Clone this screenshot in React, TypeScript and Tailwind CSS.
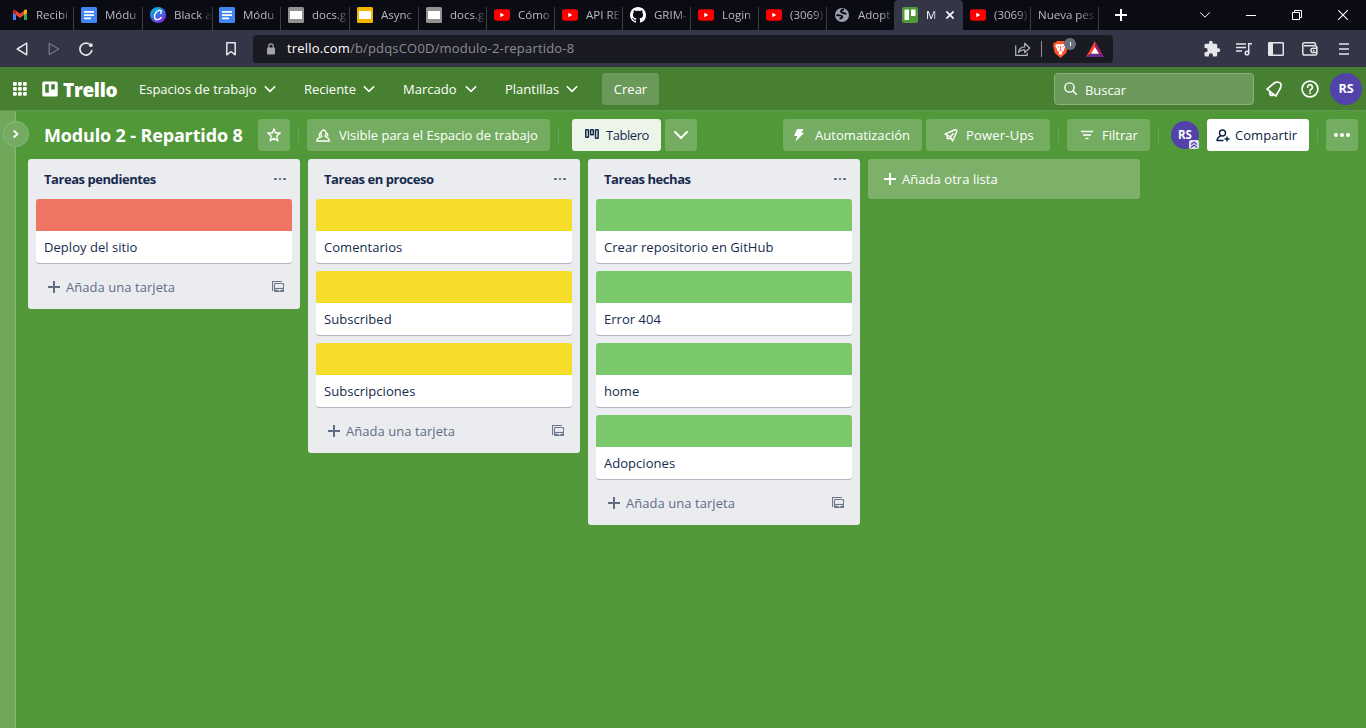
import React from 'react';

type IconProps = { className?: string };

const Gmail = () => (
  <svg viewBox="0 0 16 16" className="h-4 w-4">
    <path d="M1 3.5V13h3V7z" fill="#4285f4" />
    <path d="M15 3.5V13h-3V7z" fill="#34a853" />
    <path d="M12 4.5V8l3-2.3V4c0-1.5-1.600-2-3-.8z" fill="#fbbc04" />
    <path d="M4 8V3.800L8 6.800l4-3V8l-4 3z" fill="#ea4335" />
    <path d="M1 4v1.700L4 8V3.800C2.600 2.200 1 2.700 1 4z" fill="#c5221f" />
  </svg>
);

const Docs = () => (
  <svg viewBox="0 0 16 16" className="h-4 w-4">
    <rect width="16" height="16" rx="1.5" fill="#4285f4" />
    <path d="M3 4h10v1.700H3zM3 7.200h10v1.700H3zM3 10.500h7v1.700H3z" fill="#fff" />
  </svg>
);

const Canva = () => (
  <svg viewBox="0 0 16 16" className="h-4 w-4">
    <defs>
      <linearGradient id="canva" x1="0" y1="0" x2="0.6" y2="1">
        <stop offset="0" stopColor="#00c4cc" />
        <stop offset="0.5" stopColor="#2b7be0" />
        <stop offset="1" stopColor="#7d2ae8" />
      </linearGradient>
    </defs>
    <circle cx="8" cy="8" r="8" fill="url(#canva)" />
    <path d="M10.800 6.500c1.300-2.200-.1-3.500-1.800-3.100C6.200 4 4.100 7.600 4.500 10.200c.6 3.500 4.700 3 6.700.3" fill="none" stroke="#fff" strokeWidth="1.400" strokeLinecap="round" />
  </svg>
);

const Slides = ({ gray }: { gray?: boolean }) => (
  <svg viewBox="0 0 16 16" className="h-4 w-4">
    <rect width="16" height="16" rx="1.500" fill={gray ? '#929292' : '#f4b400'} />
    <rect x="2" y="4" width="12" height="8" fill="#fff" />
  </svg>
);

const YouTube = () => (
  <svg viewBox="0 0 16 16" className="h-4 w-4">
    <rect y="2.300" width="16" height="11.400" rx="2.800" fill="#f00" />
    <path d="M6.300 5.700v4.600l4-2.300z" fill="#fff" />
  </svg>
);

const GitHub = () => (
  <svg viewBox="0 0 16 16" className="h-4 w-4" fill="#fff">
    <path d="M8 0C3.580 0 0 3.580 0 8c0 3.540 2.290 6.530 5.470 7.590.4.070.55-.17.55-.38 0-.19-.01-.82-.01-1.490-2.010.37-2.530-.49-2.690-.94-.09-.23-.48-.94-.82-1.130-.28-.15-.68-.52-.01-.53.63-.01 1.080.58 1.230.82.72 1.210 1.870.87 2.330.66.07-.52.28-.87.51-1.070-1.780-.2-3.640-.89-3.640-3.950 0-.87.31-1.590.82-2.150-.08-.2-.36-1.020.08-2.120 0 0 .67-.21 2.200.82.64-.18 1.320-.27 2-.27s1.360.09 2 .27c1.530-1.040 2.200-.82 2.200-.82.44 1.100.16 1.920.08 2.120.51.56.82 1.270.82 2.150 0 3.070-1.870 3.750-3.650 3.950.29.25.54.73.54 1.480 0 1.070-.01 1.930-.01 2.200 0 .21.150.46.55.38A8.010 8.010 0 0 0 16 8c0-4.420-3.580-8-8-8z" />
  </svg>
);

const Globe = () => (
  <svg viewBox="0 0 16 16" className="h-4 w-4">
    <circle cx="8" cy="8" r="7" fill="#9aa0ae" />
    <path d="M10 2.500C7 2.700 6 4.500 8 5.400c1.500.6 2 1.400 4.500 1.200M2.500 8c2 .8 4.500-.2 5.500 1 1 1.400-.5 2.500-2.500 2.500" fill="none" stroke="#0b0b14" strokeWidth="1.900" />
  </svg>
);

const TrelloFavicon = () => (
  <svg viewBox="0 0 16 16" className="h-4 w-4">
    <rect width="16" height="16" rx="2" fill="#519839" />
    <rect x="2.500" y="2.500" width="4.500" height="10.500" rx="0.6" fill="#fff" />
    <rect x="9" y="2.500" width="4.500" height="6.500" rx="0.6" fill="#fff" />
  </svg>
);

const Chevron = ({ className = '' }: IconProps) => (
  <svg viewBox="0 0 12 12" className={`h-3 w-3 shrink-0 ${className}`} fill="none" stroke="currentColor" strokeWidth="1.600" strokeLinecap="round" strokeLinejoin="round">
    <path d="M1.300 3.700 6 8.400l4.700-4.700" />
  </svg>
);

const Plus = () => (
  <svg viewBox="0 0 12 12" className="h-3 w-3 shrink-0" fill="currentColor">
    <path d="M5 0h2v5h5v2H7v5H5V7H0V5h5z" />
  </svg>
);

const Template = () => (
  <svg viewBox="0 0 12 12" className="h-3 w-3 shrink-0" fill="none" stroke="#6b778c" strokeWidth="1.100">
    <path d="M.5 10V.5H10" />
    <rect x="2.500" y="2.500" width="9" height="8" rx="0.5" />
    <path d="M2.500 7.500h9" />
    <path d="M2.500 9.700h4M8.500 9.700h3" strokeWidth="1.800" />
  </svg>
);

const tabs: { icon: React.ReactNode; title: string; active?: boolean; wide?: boolean }[] = [
  { icon: <Gmail />, title: 'Recibi', wide: true },
  { icon: <Docs />, title: 'Módu', wide: true },
  { icon: <Canva />, title: 'Black a', wide: true },
  { icon: <Docs />, title: 'Módu', wide: true },
  { icon: <Slides gray />, title: 'docs.g', wide: true },
  { icon: <Slides />, title: 'Async', wide: true },
  { icon: <Slides gray />, title: 'docs.g' },
  { icon: <YouTube />, title: 'Cómo' },
  { icon: <YouTube />, title: 'API RE' },
  { icon: <GitHub />, title: 'GRIM-' },
  { icon: <YouTube />, title: 'Login' },
  { icon: <YouTube />, title: '(3069)' },
  { icon: <Globe />, title: 'Adopt' },
  { icon: <TrelloFavicon />, title: 'M', active: true, wide: true },
  { icon: <YouTube />, title: '(3069)' },
  { icon: null, title: 'Nueva pes' },
];

function TabStrip() {
  return (
    <div className="flex h-[30px] bg-[#0b0b14] pl-[5px] text-[11.5px] text-[#b9bac2]">
      {tabs.map((t, i) => (
        <div
          key={i}
          className={`flex h-[30px] shrink-0 items-center ${t.wide ? 'w-[69px]' : 'w-[68px]'} ${t.active ? '-ml-px rounded-t-[4px] bg-[#343546] pl-[8px] text-white' : 'pl-[7px]'}`}
        >
          {t.icon && <span className="mr-2 w-4 shrink-0">{t.icon}</span>}
          <span
            className={`whitespace-nowrap ${t.active ? 'w-3 [mask-image:linear-gradient(to_right,black_60%,transparent)]' : 'flex-1 [mask-image:linear-gradient(to_right,black_65%,transparent)]'}`}
          >
            {t.title}
          </span>
          {t.active ? (
            <svg viewBox="0 0 8 8" className="ml-2 h-2 w-2" stroke="#fff" strokeWidth="1.600">
              <path d="M.4.4l7.200 7.200M7.600.4.4 7.600" />
            </svg>
          ) : (
            <span className={`mt-[7px] h-[23px] w-px shrink-0 ${tabs[i + 1]?.active ? '' : 'bg-[#3c3b42]'}`} />
          )}
        </div>
      ))}
      <div className="flex flex-1 items-center text-white">
        <svg viewBox="0 0 12 12" className="ml-4 h-3 w-3" stroke="currentColor" strokeWidth="2">
          <path d="M6 0v12M0 6h12" />
        </svg>
        <svg viewBox="0 0 10 6" className="ml-[73px] h-1.5 w-2.5" fill="none" stroke="currentColor" strokeWidth="1">
          <path d="M.3.4 5 5.200 9.700.4" />
        </svg>
        <span className="ml-9 h-px w-2.5 bg-white" />
        <svg viewBox="0 0 10 10" className="ml-9 h-2.5 w-2.5" fill="none" stroke="currentColor" strokeWidth="1">
          <path d="M.5 2.500h7v7h-7zM2.500 2.500v-2h7v7h-2" />
        </svg>
        <svg viewBox="0 0 10 10" className="ml-9 h-2.5 w-2.5" fill="none" stroke="currentColor" strokeWidth="1.100">
          <path d="M.3.3l9.400 9.400M9.700.3.3 9.700" />
        </svg>
      </div>
    </div>
  );
}

function Toolbar() {
  return (
    <div className="flex h-[37px] items-center bg-[#343546] text-[#e6e6ea]">
      <svg viewBox="0 0 12 14" className="ml-4 h-3.5 w-3" fill="none" stroke="currentColor" strokeWidth="1.500" strokeLinejoin="round">
        <path d="M10.700 1.200v11.600L1.200 7z" />
      </svg>
      <svg viewBox="0 0 12 14" className="ml-5 h-3.5 w-3" fill="none" stroke="#73747f" strokeWidth="1.400" strokeLinejoin="round">
        <path d="M1.300 1.500v11L10.800 7z" />
      </svg>
      <svg viewBox="0 0 14 14" className="ml-[19px] h-3.5 w-3.5" fill="none" stroke="currentColor" strokeWidth="1.700" strokeLinecap="round">
        <path d="M9.500 1.600A6 6 0 1 0 12.800 8.500" />
        <circle cx="11.800" cy="3.200" r="1.900" fill="currentColor" stroke="none" />
      </svg>
      <svg viewBox="0 0 10 14" className="ml-[133px] h-3.5 w-2.5" fill="none" stroke="currentColor" strokeWidth="1.500" strokeLinejoin="round">
        <path d="M.8.800h8.400v12L5 9.500.8 12.800z" />
      </svg>
      <div className="ml-[17px] flex h-7 w-[860px] items-center rounded-[4px] bg-[#191a22] pl-3.5">
        <svg viewBox="0 0 8 12" className="h-3 w-2">
          <rect y="4.500" width="8" height="7" rx="1" fill="#a1a2ab" />
          <path d="M1.800 5V3a2.200 2.200 0 0 1 4.400 0v2" fill="none" stroke="#a1a2ab" strokeWidth="1.200" />
        </svg>
        <div className="ml-3 w-[728px] whitespace-nowrap text-[13px] tracking-[0.18px] text-[#8c8d95]">
          <span className="text-white">trello.com</span>/b/pdqsCO0D/modulo-2-repartido-8
        </div>
        <svg viewBox="0 0 16 14" className="h-3.5 w-4" fill="none" stroke="#b6b7be" strokeWidth="1.200" strokeLinejoin="round">
          <path d="M.7 3.500v9.800h11.500v-2.500M3.500 10.500c.6-3.800 2.800-5.600 6.200-5.600V1.200l5 4.800-5 4.600V7.800c-3-.2-4.700.7-6.200 2.700z" />
        </svg>
        <span className="ml-2.5 h-4 w-px bg-[#8f9099]" />
        <div className="relative ml-[11px] h-5 w-[23px]">
          <svg viewBox="0 0 15 18" className="mt-px h-[18px] w-[15px]">
            <path d="M4 1h7l1.500 1.500H14L15 5l-1.700 8L7.500 18 1.700 13 0 5l1-2.500h1.500z" fill="#fb542b" />
            <path d="M3 4.500 6 4l1.500.500L9 4l3 .5.7 2-2 3 .300 1.500-2.500 1 1 1.500-2 1.500-2-1.500 1-1.500L4 11l.3-1.500-2-3z" fill="#fff" />
            <path d="M4.200 6.300l2.100.9M10.800 6.300l-2.100.9M7.500 6v4M6 11l1.500-.7L9 11" stroke="#fb542b" strokeWidth=".8" fill="none" />
          </svg>
          <span className="absolute -top-px right-0 flex h-3 w-3 items-center justify-center rounded-full bg-[#68707f]">
            <span className="h-1 w-px bg-white" />
          </span>
        </div>
        <svg viewBox="0 0 18 16" className="ml-2.5 h-4 w-[18px]">
          <path d="M9 0 0 16l5-3 4-6z" fill="#ff4724" />
          <path d="M9 0l9 16-5-3-4-6z" fill="#9e1f63" />
          <path d="M0 16h18l-5-3.500H5z" fill="#662d91" />
          <path d="M9 6 13 12.800H5z" fill="#fff" />
        </svg>
      </div>
      <svg viewBox="0 0 24 24" className="ml-[90px] h-[18px] w-[18px]" fill="currentColor">
        <path d="M20.500 11H19V7c0-1.100-.9-2-2-2h-4V3.500a2.500 2.500 0 0 0-5 0V5H4c-1.100 0-2 .9-2 2v3.800h1.500a2.700 2.700 0 0 1 0 5.400H2V20c0 1.100.9 2 2 2h3.800v-1.500a2.700 2.700 0 0 1 5.400 0V22H17c1.100 0 2-.9 2-2v-4h1.500a2.500 2.500 0 0 0 0-5z" />
      </svg>
      <svg viewBox="0 0 16 14" className="ml-[15px] h-3.5 w-4" fill="none" stroke="currentColor" strokeWidth="1.500">
        <path d="M0 2h10M0 5.500h10M0 9h6M12.700 11V1.700H16" />
        <circle cx="11" cy="11" r="1.800" />
      </svg>
      <svg viewBox="0 0 16 14" className="ml-4 h-3.5 w-4" fill="none" stroke="currentColor" strokeWidth="1.500">
        <rect x=".75" y=".75" width="14.500" height="12.500" rx=".6" />
        <path d="M1 1h4v12H1z" fill="currentColor" stroke="none" />
      </svg>
      <svg viewBox="0 0 16 14" className="ml-[18px] h-3.5 w-4" fill="none" stroke="currentColor" strokeWidth="1.500">
        <path d="M13.500 4V2.300c0-.9-.6-1.500-1.500-1.500H2.300C1.300.8.8 1.400.8 2.300v9c0 1.100.7 1.800 1.800 1.800h10.600c1.100 0 1.700-.6 1.700-1.700V5.500c0-1-.6-1.700-1.700-1.700H2" />
        <path d="M15 6.300h-4a2.100 2.100 0 0 0 0 4.200h4M11 8.400h1.500" />
      </svg>
      <svg viewBox="0 0 10 12" className="ml-[21px] h-3 w-2.5" stroke="currentColor" strokeWidth="1.500">
        <path d="M0 1h10M0 6h10M0 11h10" />
      </svg>
    </div>
  );
}

const navItems = [
  { label: 'Espacios de trabajo', box: 'w-[165px] pr-7' },
  { label: 'Reciente', box: 'w-[99px] pr-7' },
  { label: 'Marcado', box: 'w-[102px] pr-7' },
  { label: 'Plantillas', box: 'w-[97px] pr-6' },
];

function Nav() {
  return (
    <div className="flex h-[43px] items-center bg-[#468030] text-[13px] text-white">
      <svg viewBox="0 0 14 14" className="ml-[13px] h-3.5 w-3.5" fill="currentColor">
        {[0, 5, 10].flatMap((y) => [0, 5, 10].map((x) => <rect key={`${x}-${y}`} x={x} y={y} width="3.800" height="3.800" rx="1" />))}
      </svg>
      <svg viewBox="0 0 16 16" className="ml-[15px] h-4 w-4">
        <path fillRule="evenodd" d="M2 .5h12A1.700 1.700 0 0 1 15.700 2v12a1.700 1.700 0 0 1-1.700 1.500H2A1.700 1.700 0 0 1 .3 14V2A1.700 1.700 0 0 1 2 .5zM3.200 3.200v8.600h3.600V3.200zM9.200 3.200v5.300h3.600V3.200z" fill="#fff" />
      </svg>
      <span className="ml-[5px] mt-[2px] w-[76px] whitespace-nowrap text-[19px] font-extrabold leading-5 tracking-[-0.35px]">Trello</span>
      {navItems.map((n) => (
        <div key={n.label} className={`flex items-center justify-between whitespace-nowrap ${n.box}`}>
          <span className="pt-[2px]">{n.label}</span>
          <Chevron />
        </div>
      ))}
      <button className="mt-px h-8 w-[57px] rounded-[3px] bg-[#6b995a] pt-px">Crear</button>
      <div className="ml-auto mt-px flex h-8 w-[200px] items-center rounded-[4px] border border-[#8bb07e] bg-[#6b995a] pl-[9px]">
        <svg viewBox="0 0 13 13" className="mb-px h-[13px] w-[13px]" fill="none" stroke="currentColor" strokeWidth="1.400" strokeLinecap="round">
          <circle cx="5.500" cy="5.500" r="4.600" />
          <path d="M9 9l3.300 3.200" />
        </svg>
        <span className="ml-2 pt-[3px] tracking-[-0.05px]">Buscar</span>
      </div>
      <svg viewBox="0 0 16 16" className="ml-3 h-4 w-4" fill="none" stroke="currentColor" strokeWidth="1.700" strokeLinejoin="round" strokeLinecap="round">
        <path d="M1 8.200 8.300 2C10.500.6 14.800.900 15 3.800c.1 2-.6 3.800-1.400 4.800L9.800 15zM4 11.200c-.8 2.500 1 4 3.200 2.800" />
      </svg>
      <svg viewBox="0 0 18 18" className="ml-[19px] h-[18px] w-[18px]" fill="none" stroke="currentColor" strokeWidth="1.700" strokeLinecap="round">
        <circle cx="9" cy="9" r="7.900" />
        <path d="M6.600 7.200a2.400 2.400 0 1 1 3.800 1.900c-.9.600-1.400.9-1.400 1.900" />
        <circle cx="9" cy="13.200" r=".5" fill="currentColor" strokeWidth="1" />
      </svg>
      <div className="ml-[11px] mr-1 mt-px flex h-8 w-8 items-center justify-center rounded-full bg-[#5243aa] text-[12.5px] font-bold">RS</div>
    </div>
  );
}

const Divider = ({ className = '' }: IconProps) => <span className={`h-4 w-px shrink-0 bg-[#6ba656] ${className}`} />;

function BoardHeader() {
  const btn = 'flex h-8 shrink-0 items-center whitespace-nowrap rounded-[3px]';
  return (
    <div className="flex h-12 items-center pl-7 pr-2 text-[13px] text-white">
      <h1 className="w-[214px] shrink-0 whitespace-nowrap text-[18px] font-bold leading-6 tracking-[-0.15px]">Modulo 2 - Repartido 8</h1>
      <button className={`${btn} w-8 justify-center bg-[#74ad61]`}>
        <svg viewBox="0 0 14 14" className="h-3.5 w-3.5" fill="none" stroke="currentColor" strokeWidth="1.300" strokeLinejoin="round">
          <path d="M7 .8l1.600 4.200h4.700L9.700 8l1.200 5L7 10.300 3.100 13l1.200-5L.7 5h4.700z" />
        </svg>
      </button>
      <Divider className="ml-2" />
      <button className={`${btn} ml-2 w-[243px] bg-[#74ad61] pl-[9px]`}>
        <svg viewBox="0 0 14 13" className="h-[13px] w-3.5" fill="none" stroke="currentColor" strokeWidth="1.300" strokeLinejoin="round">
          <path d="M5.800 7.500C4 5 5.200 1 7.600 1s3.500 4 1.300 6.200l3.600 2.300c.6.500.8 1.500.8 2.500H.8c0-1.200.3-2 1.300-2.700z" />
          <path d="M4.800 3.600C3.200 4.500 3 6 3.500 7.800M10.500 3.800c1.200.8 1.500 2.200 1 3.700" />
        </svg>
        <span className="ml-[9px] pt-px">Visible para el Espacio de trabajo</span>
      </button>
      <Divider className="ml-2" />
      <button className={`${btn} ml-[13px] w-[89px] bg-[#edf5eb] pl-[13px] text-[#172b4d]`}>
        <svg viewBox="0 0 14 10" className="mb-[3px] h-2.5 w-3.5" fill="none" stroke="currentColor" strokeWidth="1.500">
          <rect x=".75" y=".75" width="2.700" height="7.500" rx=".6" />
          <rect x="5.600" y=".75" width="2.700" height="5" rx=".6" />
          <rect x="10.500" y=".75" width="2.700" height="8.500" rx=".6" />
        </svg>
        <span className="ml-[7px] pt-px tracking-[-0.45px]">Tablero</span>
      </button>
      <button className={`${btn} ml-1 w-8 justify-center bg-[#74ad61]`}>
        <svg viewBox="0 0 14 8" className="h-2 w-3.5" fill="none" stroke="currentColor" strokeWidth="1.900" strokeLinecap="round" strokeLinejoin="round">
          <path d="M1 1l6 6 6-6" />
        </svg>
      </button>
      <button className={`${btn} ml-auto w-[139px] bg-[#74ad61] pl-[10px]`}>
        <svg viewBox="0 0 12 14" className="h-3.5 w-3" fill="currentColor">
          <path d="M4 1h6.500L8.700 5H11L2.500 13.500 4.300 8H1z" />
        </svg>
        <span className="ml-[10px] pt-px tracking-[0.05px]">Automatización</span>
      </button>
      <button className={`${btn} ml-1 w-[124px] bg-[#74ad61] pl-[18px]`}>
        <svg viewBox="0 0 14 14" className="h-3.5 w-3.5" fill="none" stroke="currentColor" strokeWidth="1.400" strokeLinejoin="round">
          <path d="M1 6.200 10.500 2c1.500-.6 2.600.3 2.200 1.800L8.500 13 6.500 8.800zM3.200 7.300v3.200h3.200" />
          <path d="M6.500 8.800l3-3.600" />
        </svg>
        <span className="ml-2 pt-px tracking-[0.2px]">Power-Ups</span>
      </button>
      <Divider className="ml-2" />
      <button className={`${btn} ml-2 w-[83px] bg-[#74ad61] pl-3.5`}>
        <svg viewBox="0 0 12 10" className="h-2.5 w-3" stroke="currentColor" strokeWidth="1.500">
          <path d="M0 1.500h12M2 5h8M4.500 8.500h3" />
        </svg>
        <span className="ml-[9px] pt-px">Filtrar</span>
      </button>
      <Divider className="ml-2" />
      <div className="relative ml-3 flex h-7 w-7 items-center justify-center rounded-full bg-[#5243aa] text-[11.5px] font-bold">
        RS
        <svg viewBox="0 0 10 9" className="absolute right-0 bottom-0 h-[9px] w-[10px]">
          <rect width="10" height="9" rx="2" fill="#e4e1f4" />
          <path d="M2 4.500 5 2l3 2.500M2 7.500 5 5l3 2.500" fill="none" stroke="#5243aa" strokeWidth="1.200" />
        </svg>
      </div>
      <button className={`${btn} ml-2 w-[102px] bg-white pl-[9px] text-[#091e42]`}>
        <svg viewBox="0 0 14 13" className="h-[13px] w-3.5" fill="none" stroke="currentColor" strokeWidth="1.400" strokeLinejoin="round">
          <circle cx="6.500" cy="4" r="3" />
          <path d="M4.800 6.800C2.500 7.500 1.300 9 1 11.500h6.500M11 7.500v5M8.500 10h5" />
        </svg>
        <span className="ml-[5px] pt-px tracking-[0.05px]">Compartir</span>
      </button>
      <Divider className="ml-2" />
      <button className={`${btn} ml-2 w-8 justify-center gap-[2px] bg-[#74ad61]`}>
        <span className="h-1 w-1 rounded-full bg-white" />
        <span className="h-1 w-1 rounded-full bg-white" />
        <span className="h-1 w-1 rounded-full bg-white" />
      </button>
    </div>
  );
}

const lists = [
  { title: 'Tareas pendientes', cover: 'bg-[#ef7564]', cards: ['Deploy del sitio'] },
  { title: 'Tareas en proceso', cover: 'bg-[#f5dd29]', cards: ['Comentarios', 'Subscribed', 'Subscripciones'] },
  { title: 'Tareas hechas', cover: 'bg-[#7bc86c]', cards: ['Crear repositorio en GitHub', 'Error 404', 'home', 'Adopciones'] },
];

function List({ title, cover, cards }: (typeof lists)[number]) {
  return (
    <section className="w-[272px] shrink-0 rounded-[3px] bg-[#ebecf0] px-2 text-[13px] text-[#172b4d]">
      <div className="flex h-10 items-center pl-2 pr-1.5">
        <h2 className="pt-[2px] text-[13px] font-bold tracking-[-0.45px]">{title}</h2>
        <span className="ml-auto flex gap-[2px]">
          <span className="h-[2px] w-[3px] bg-[#6b778c]" />
          <span className="h-[2px] w-[2px] bg-[#6b778c]" />
          <span className="h-[2px] w-[3px] bg-[#6b778c]" />
        </span>
      </div>
      <div className="flex flex-col gap-2">
        {cards.map((c) => (
          <div key={c} className="h-16 overflow-hidden rounded-[3px] bg-white shadow-[0_1px_0_#091e4240]">
            <div className={`h-8 ${cover}`} />
            <div className="flex h-8 items-center pl-2 pt-[2px] tracking-[0.04px]">{c}</div>
          </div>
        ))}
      </div>
      <div className="flex h-[46px] items-center pl-3 pr-2 pt-0.5 text-[#5e6c84]">
        <Plus />
        <span className="ml-1.5 pt-[2px] tracking-[0.05px]">Añada una tarjeta</span>
        <span className="ml-auto"><Template /></span>
      </div>
    </section>
  );
}

export default function App() {
  return (
    <div className="flex h-[728px] w-[1366px] flex-col overflow-hidden bg-[#519839] font-['Open_Sans',sans-serif]">
      <TabStrip />
      <Toolbar />
      <Nav />
      <div className="flex min-h-0 flex-1 border-t border-[#5f9a4c]">
        <aside className="relative w-4 shrink-0 border-r border-[#86b974] bg-[#6fa75b]">
          <button className="absolute left-[3px] top-[10px] flex h-[26px] w-[26px] items-center justify-center rounded-full border border-[#8cba7c] bg-[#74aa62] text-white">
            <svg viewBox="0 0 6 8" className="h-2 w-1.5" fill="none" stroke="currentColor" strokeWidth="1.800" strokeLinecap="round" strokeLinejoin="round">
              <path d="M1.200 1 4.500 4 1.200 7" />
            </svg>
          </button>
        </aside>
        <main className="flex min-w-0 flex-1 flex-col">
          <BoardHeader />
          <div className="flex items-start gap-2 pl-3">
            {lists.map((l) => (
              <List key={l.title} {...l} />
            ))}
            <button className="flex h-10 w-[272px] shrink-0 items-center rounded-[3px] bg-[#7db16a] pl-4 text-[13px] text-white">
              <Plus />
              <span className="ml-1.5 pt-[2px] tracking-[0.05px]">Añada otra lista</span>
            </button>
          </div>
        </main>
      </div>
    </div>
  );
}
